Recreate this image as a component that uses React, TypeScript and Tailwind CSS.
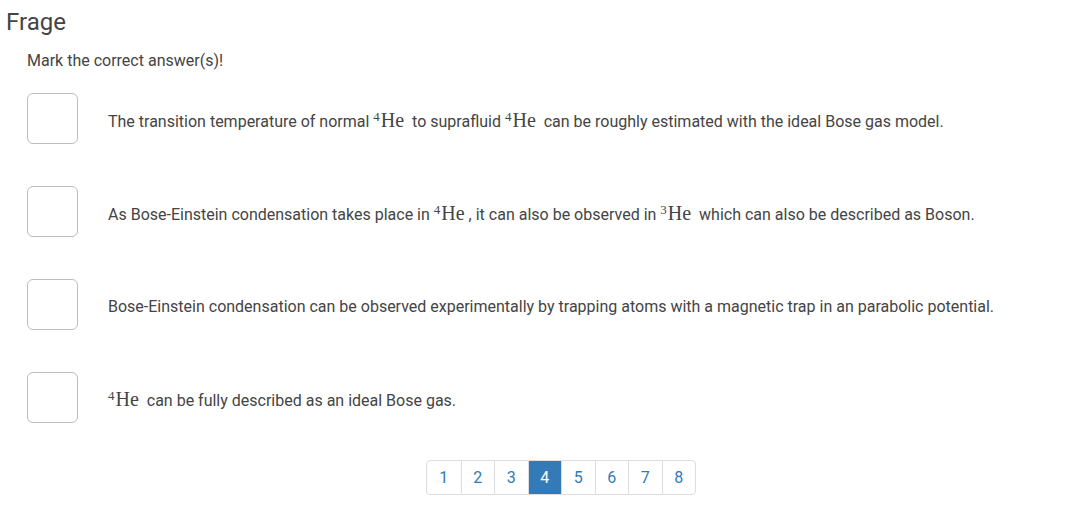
import React from "react";

function He({ n }: { n: string }) {
  return (
    <span className="font-['Liberation_Serif',serif] text-[20px] leading-none">
      <sup className="text-[13px] -top-[0.5em] mr-[1px]">{n}</sup>He
    </span>
  );
}

const answers: React.ReactNode[] = [
  <>
    The transition temperature of normal <He n="4" />&nbsp; to suprafluid <He n="4" />&nbsp; can be roughly estimated with the ideal Bose gas model.
  </>,
  <>
    As Bose-Einstein condensation takes place in <He n="4" /> , it can also be observed in <He n="3" />&nbsp; which can also be described as Boson.
  </>,
  <>Bose-Einstein condensation can be observed experimentally by trapping atoms with a magnetic trap in an parabolic potential.</>,
  <>
    <He n="4" />&nbsp; can be fully described as an ideal Bose gas.
  </>,
];

export default function App() {
  const pages = [1, 2, 3, 4, 5, 6, 7, 8];
  return (
    <div className="w-[1082px] h-[522px] bg-white font-['Roboto',sans-serif] text-[#444]">
      <h1 className="pl-[6px] pt-[7px] text-[24px] leading-[30px] text-[#444]">Frage</h1>
      <p className="pl-[27px] mt-[14px] text-[16px] leading-[20px]">Mark the correct answer(s)!</p>

      <div className="mt-[22px] flex flex-col gap-[42px] pl-[27px]">
        {answers.map((a, i) => (
          <div key={i} className="flex items-center h-[51px]">
            <div className="w-[51px] h-[51px] shrink-0 rounded-[6px] border border-[#bdbdbd] bg-white" />
            <div className="ml-[30px] text-[16px] leading-[20px] pt-[5px]">{a}</div>
          </div>
        ))}
      </div>

      <div className="mt-[37px] ml-[426px] flex w-fit rounded-[4px] border border-[#ddd] overflow-hidden">
        {pages.map((p) => (
          <div
            key={p}
            className={`w-[33.5px] h-[33px] flex items-center justify-center text-[16px] ${
              p === 1 ? "" : "border-l border-[#ddd]"
            } ${p === 4 ? "bg-[#337ab7] text-white border-[#337ab7]" : "text-[#337ab7]"}`}
          >
            {p}
          </div>
        ))}
      </div>
    </div>
  );
}
